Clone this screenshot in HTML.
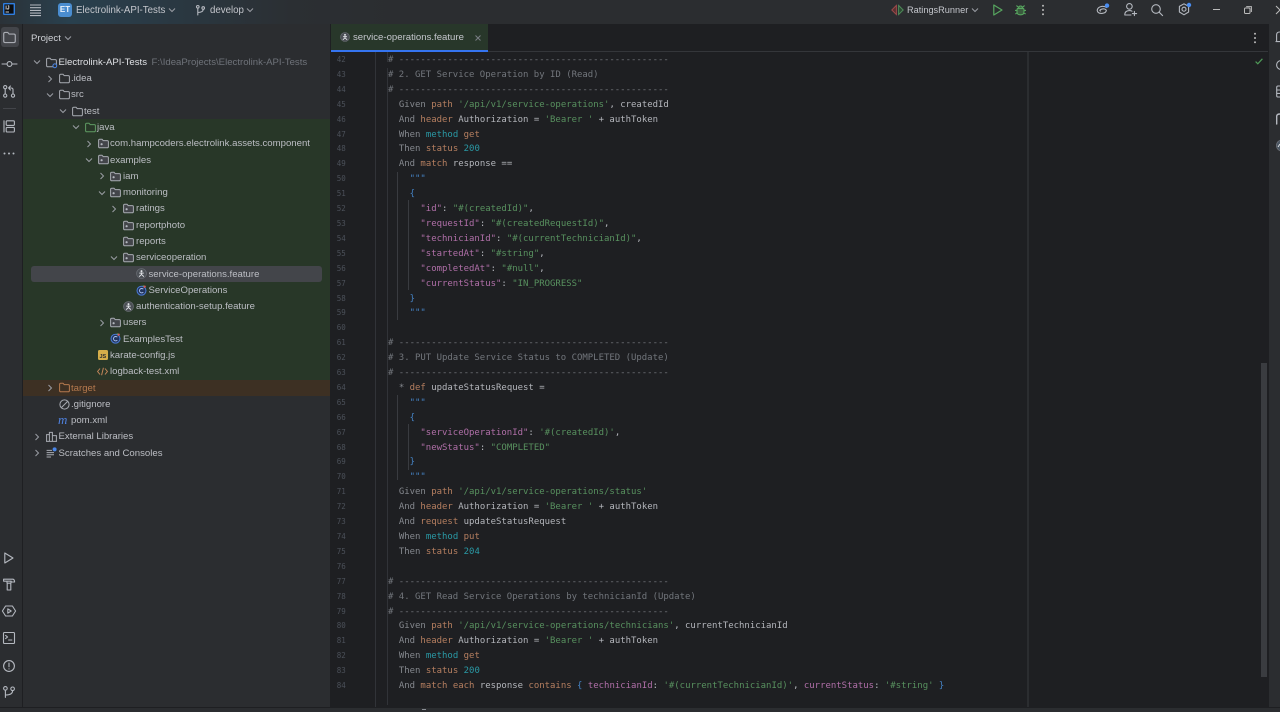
<!DOCTYPE html>
<html><head><meta charset="utf-8"><style>
html,body{margin:0;padding:0;width:1280px;height:712px;overflow:hidden;background:#1e1f22}
*{box-sizing:border-box}
#wrap{position:absolute;left:0;top:0;width:1280px;height:712px;overflow:hidden;filter:blur(.35px)}
.a{position:absolute}
#top{left:0;top:0;width:1280px;height:24px;background:linear-gradient(90deg,#2b3238 0,#29404e 70px,#2a3a45 150px,#2b2f33 290px,#2b2d30 400px);font:9.6px/23px "Liberation Sans",sans-serif;color:#c4c6cc}
#left{left:0;top:24px;width:23px;height:683px;background:#2b2d30;border-right:1px solid #1e1f22}
#panel{left:23px;top:24px;width:308px;height:683px;background:#2b2d30;border-right:1px solid #1e1f22}
#right{left:1268px;top:24px;width:12px;height:683px;background:#2b2d30}
#bottom{left:0;top:707px;width:1280px;height:5px;background:#2b2d30;border-top:1px solid #1e1f22}
#tabbar{left:331px;top:24px;width:937px;height:28px;background:#1e1f22;border-bottom:1px solid #34363a}
#tab{left:331px;top:24px;width:157px;height:28px;background:#28372a;border-bottom:2px solid #3574f0;font:9.6px/28.6px "Liberation Sans",sans-serif;color:#c4c6cc;padding-left:22px}
.s{stroke:#b4b8bf;fill:none;stroke-width:1.1;stroke-linecap:round;stroke-linejoin:round}
svg{position:absolute;overflow:visible}
#tree{left:0;top:54.9px;width:331px;font:9.6px/16.29px "Liberation Sans",sans-serif;color:#bcbec4}
.r{position:relative;height:16.29px;white-space:nowrap}
.r b{font-weight:400;position:absolute;top:0}
.r svg{top:1.8px}
.bg{position:absolute;left:23px;width:307px}
#code,#nums{font:8.97px/14.905px "DejaVu Sans Mono",monospace;white-space:pre}
#code{left:388px;top:53px;color:#b4b6bc}
#nums{left:336.7px;top:53px;font-size:7.5px;color:#4b5059}
.c{color:#72767c}.k{color:#85888e}.o{color:#b67f60}.t{color:#2a9aa6}.g{color:#58915f}.p{color:#b06fa8}.b{color:#4583c5}
.l{position:absolute;width:1px;background:#313338}
</style></head><body>
<svg width="0" height="0" style="position:absolute">
<defs>
<symbol id="f" viewBox="0 0 11 11" overflow="visible"><path d="M.6 2.4Q.6 1.2 1.8 1.2H4L5.2 2.6H9.2Q10.4 2.6 10.4 3.8V8.6Q10.4 9.8 9.2 9.8H1.8Q.6 9.8 .6 8.6Z" fill="none" stroke="#a8abb2" stroke-width="1"/></symbol>
<symbol id="fp" viewBox="0 0 11 11" overflow="visible"><path d="M.6 2.4Q.6 1.2 1.8 1.2H4L5.2 2.6H9.2Q10.4 2.6 10.4 3.8V8.6Q10.4 9.8 9.2 9.8H1.8Q.6 9.8 .6 8.6Z" fill="#43454a" stroke="#a8abb2" stroke-width="1"/><circle cx="3.6" cy="6.2" r="1.1" fill="#b4b8bf"/></symbol>
<symbol id="kar" viewBox="0 0 12 12" overflow="visible"><circle cx="6" cy="6" r="5.4" fill="#4c5056" stroke="#6f737a" stroke-width=".7"/><circle cx="6" cy="3.4" r="1.1" fill="#e4e6ea"/><path d="M6 4.8V7L3.4 9.4M6 7L8.6 9.4M3.6 5.6H8.4" stroke="#e4e6ea" stroke-width="1" fill="none"/></symbol>
<symbol id="cls" viewBox="0 0 12 12" overflow="visible"><circle cx="6" cy="6.2" r="4.9" fill="#22345c" stroke="#4a7ad8" stroke-width="1.1"/><path d="M8 4.6A2.4 2.4 0 1 0 8 7.8" fill="none" stroke="#a9c2f2" stroke-width="1"/><circle cx="9.4" cy="1.8" r="1.3" fill="#d85a5a"/><path d="M7.2 1L8.6 1" stroke="#5fae6a" stroke-width="1"/></symbol>
<symbol id="cd" viewBox="0 0 8 8" overflow="visible"><path d="M1 2.5L4 5.5L7 2.5" fill="none" stroke="#9a9da4" stroke-width="1"/></symbol>
<symbol id="cr" viewBox="0 0 8 8" overflow="visible"><path d="M2.5 1L5.5 4L2.5 7" fill="none" stroke="#9a9da4" stroke-width="1"/></symbol>
</defs></svg>
<div id="wrap">
<div id="top" class="a">
<svg style="left:3px;top:3px" width="12" height="12"><rect width="12" height="12" fill="#2f7ee0" rx="1"/><rect x="1.4" y="1.4" width="9.2" height="9.2" fill="#0c0d10"/><text x="2.4" y="6.4" font-family="Liberation Sans" font-size="5" font-weight="700" fill="#fff">IJ</text><path d="M2.6 9H6" stroke="#fff" stroke-width=".8"/></svg>
<svg style="left:30px;top:4px" width="11" height="12"><path d="M0 1H11M0 3.7H11M0 6.4H11M0 9.1H11M0 11.6H11" stroke="#b4b8bf" stroke-width="1.1" fill="none"/></svg>
<div class="a" style="left:58px;top:3px;width:14px;height:14px;border-radius:3px;background:#4a8dd0;color:#e8f1fb;font:700 8px/14px 'Liberation Sans',sans-serif;text-align:center;">ET</div>
<span class="a" style="left:76px;top:-1px;font-size:9.7px">Electrolink-API-Tests</span>
<svg style="left:168px;top:6px" width="8" height="8"><use href="#cd" width="8" height="8"/></svg>
<svg style="left:196px;top:5px" width="9" height="11" class="s"><circle cx="1.8" cy="1.8" r="1.3"/><circle cx="7.2" cy="3" r="1.3"/><path d="M1.8 3.2V10M1.8 7.5Q7.2 7.5 7.2 4.4"/></svg>
<span class="a" style="left:210px;top:-1px;font-size:9.7px">develop</span>
<svg style="left:246px;top:6px" width="8" height="8"><use href="#cd" width="8" height="8"/></svg>

<svg style="left:891px;top:4px" width="13" height="12"><path d="M5.4 1.4L.8 6L5.4 10.6Z" fill="#5a2f30" stroke="#9b4a4a"/><path d="M7.6 1.4L12.2 6L7.6 10.6Z" fill="#2d4a33" stroke="#4f8a5a"/></svg>
<span class="a" style="left:907px;top:-1px;font-size:9.2px">RatingsRunner</span>
<svg style="left:971px;top:6px" width="8" height="8"><use href="#cd" width="8" height="8"/></svg>
<svg style="left:993px;top:4px" width="10" height="12"><path d="M.8 1V11L9 6Z" fill="none" stroke="#57a65f" stroke-width="1.2" stroke-linejoin="round"/></svg>
<svg style="left:1015px;top:4px" width="11" height="12"><path d="M3 4.4H8Q9 4.4 9 6V8Q9 10.8 5.5 10.8T2 8V6Q2 4.4 3 4.4ZM3.6 4.4Q3.6 2 5.5 2T7.4 4.4M0 6.4H2M9 6.4H11M.4 10L2.4 8.6M10.6 10L8.6 8.6M1.4 1.6L3.4 3.2M9.6 1.6L7.6 3.2" fill="#3a5b3e" stroke="#57a65f" stroke-width="1.1"/></svg>
<svg style="left:1041px;top:4px" width="4" height="12"><circle cx="2" cy="1.8" r="1" fill="#bbb"/><circle cx="2" cy="6" r="1" fill="#bbb"/><circle cx="2" cy="10.2" r="1" fill="#bbb"/></svg>
<svg style="left:1096px;top:3px" width="14" height="13" class="s"><path d="M10.6 4.6Q8 2.8 4.8 3.6T1.2 7.4Q1.8 10.8 6 10.4T10.4 7.2Q8.6 5.2 5.6 6.2T4.6 8"/><circle cx="11" cy="2.6" r="2.2" fill="#4a8df0" stroke="none"/></svg>
<svg style="left:1124px;top:3px" width="13" height="13" class="s"><circle cx="5.4" cy="3.4" r="2.8"/><path d="M.8 12Q.8 7.6 5.4 7.6Q7 7.6 8 8.2M.8 12H7M10.4 8.4V12.6M8.4 10.6H12.6"/></svg>
<svg style="left:1151px;top:3.5px" width="12" height="12" class="s" ><circle cx="5" cy="5" r="4.3"/><path d="M8.2 8.2L11.6 11.6"/></svg>
<svg style="left:1178px;top:3px" width="13" height="13" class="s"><path d="M6 .8L10.6 3.4V9L6 11.8L1.4 9V3.4Z"/><circle cx="6" cy="6.2" r="2"/><circle cx="11" cy="2" r="2.2" fill="#4a8df0" stroke="none"/></svg>
<div class="a" style="left:1213px;top:9px;width:7px;height:1px;background:#bbb"></div>
<svg style="left:1244px;top:6px" width="8" height="8" fill="none" stroke="#bbb"><rect x=".5" y="2" width="5.5" height="5.5" rx="1"/><path d="M2.2 .6H7.4V6"/></svg>
<svg style="left:1276px;top:6px" width="4" height="8" fill="none" stroke="#bbb"><path d="M0 0L8 8M0 8L8 0"/></svg>
</div>

<div id="left" class="a"></div>
<div class="a" style="left:1px;top:27px;width:18px;height:20px;border-radius:3px;background:#43454a"></div>
<svg style="left:3px;top:31px" width="13" height="13"><use href="#f" width="13" height="13"/></svg>
<svg style="left:2px;top:60px" width="15" height="8" class="s"><circle cx="7.5" cy="4" r="2.4"/><path d="M0 4H5M10 4H15"/></svg>
<svg style="left:3px;top:85px" width="12" height="13" class="s"><circle cx="2.2" cy="2.2" r="1.6"/><circle cx="2.2" cy="10.6" r="1.6"/><circle cx="10" cy="10.6" r="1.6"/><path d="M2.2 3.8V9M10 9V4.6Q10 3 8 3H6M7.4 1L5.6 3L7.4 5"/></svg>
<div class="a" style="left:3px;top:108px;width:13px;height:1px;background:#43454a"></div>
<svg style="left:3px;top:120px" width="12" height="13" class="s"><path d="M1 .8V12"/><rect x="3.2" y=".8" width="8.2" height="4.6" rx="1"/><rect x="3.2" y="7.4" width="8.2" height="4.6" rx="1"/></svg>
<svg style="left:3px;top:152px" width="12" height="3"><circle cx="1.5" cy="1.5" r="1" fill="#b4b8bf"/><circle cx="6" cy="1.5" r="1" fill="#b4b8bf"/><circle cx="10.5" cy="1.5" r="1" fill="#b4b8bf"/></svg>
<svg style="left:4px;top:552px" width="10" height="12" class="s"><path d="M.8 1V11L9 6Z"/></svg>
<svg style="left:3px;top:578px" width="12" height="13" class="s"><path d="M.6 1.2H10Q11.6 1.6 11.6 4H8.2V3.2H.6ZM4 3.4V5M8 3.4V5M4.2 5.2H7.8V12H4.2Z"/></svg>
<svg style="left:2px;top:605px" width="14" height="12" class="s"><path d="M3.6 1H10.4L13.6 6L10.4 11H3.6L.4 6Z"/><path d="M5.8 3.8V8.2L9.2 6Z"/></svg>
<svg style="left:3px;top:632px" width="12" height="12" class="s"><rect x=".5" y=".5" width="11" height="11" rx="1"/><path d="M2.6 3.4L4.6 5L2.6 6.6M5.6 8H8.8"/></svg>
<svg style="left:3px;top:660px" width="12" height="12" class="s"><circle cx="6" cy="6" r="5.4"/><path d="M6 3V6.8M6 8.8V9"/></svg>
<svg style="left:3px;top:686px" width="12" height="12" class="s"><circle cx="2.4" cy="2.4" r="1.8"/><circle cx="9.6" cy="2.8" r="1.8"/><path d="M2.4 4.2V11.4M2.4 9Q9.6 9 9.6 4.6"/></svg>

<div id="panel" class="a"></div>
<div class="a" style="left:31px;top:32px;font:9.6px/13px 'Liberation Sans',sans-serif;color:#d0d2d7">Project</div>
<svg style="left:64px;top:34px" width="8" height="8"><use href="#cd" width="8" height="8"/></svg>

<div class="bg" style="top:119.1px;height:260.7px;background:#283728"></div>
<div class="bg" style="top:379.8px;height:16.3px;background:#3d3023"></div>
<div class="a" style="left:31px;top:265.7px;width:291px;height:16.5px;border-radius:3px;background:#43454a"></div>

<div id="tree" class="a">
<div class="r"><svg style="left:32.5px;top:3.4px" width="8" height="8"><use href="#cd" width="8" height="8"/></svg><svg style="left:46px" width="11" height="11"><use href="#f" width="11" height="11"/><circle cx="8.8" cy="8.8" r="1.9" fill="#2b2d30" stroke="#4a86e8"/></svg><b style="left:58.5px;color:#dfe1e5">Electrolink-API-Tests</b><b style="left:151.5px;color:#6f737a">F:\IdeaProjects\Electrolink-API-Tests</b></div>
<div class="r"><svg style="left:45.5px;top:3.4px" width="8" height="8"><use href="#cr" width="8" height="8"/></svg><svg style="left:59px" width="11" height="11"><use href="#f" width="11" height="11"/></svg><b style="left:71px">.idea</b></div>
<div class="r"><svg style="left:45.5px;top:3.4px" width="8" height="8"><use href="#cd" width="8" height="8"/></svg><svg style="left:59px" width="11" height="11"><use href="#f" width="11" height="11"/></svg><b style="left:71px">src</b></div>
<div class="r"><svg style="left:58.5px;top:3.4px" width="8" height="8"><use href="#cd" width="8" height="8"/></svg><svg style="left:72px" width="11" height="11"><use href="#f" width="11" height="11"/></svg><b style="left:84px">test</b></div>
<div class="r"><svg style="left:71.5px;top:3.4px" width="8" height="8"><use href="#cd" width="8" height="8"/></svg><svg style="left:85px" width="11" height="11"><path d="M.6 2.4Q.6 1.2 1.8 1.2H4L5.2 2.6H9.2Q10.4 2.6 10.4 3.8V8.6Q10.4 9.8 9.2 9.8H1.8Q.6 9.8 .6 8.6Z" fill="none" stroke="#5f9b63"/></svg><b style="left:97px">java</b></div>
<div class="r"><svg style="left:84.5px;top:3.4px" width="8" height="8"><use href="#cr" width="8" height="8"/></svg><svg style="left:98px" width="11" height="11"><use href="#fp" width="11" height="11"/></svg><b style="left:110px">com.hampcoders.electrolink.assets.component</b></div>
<div class="r"><svg style="left:84.5px;top:3.4px" width="8" height="8"><use href="#cd" width="8" height="8"/></svg><svg style="left:98px" width="11" height="11"><use href="#fp" width="11" height="11"/></svg><b style="left:110px">examples</b></div>
<div class="r"><svg style="left:97.5px;top:3.4px" width="8" height="8"><use href="#cr" width="8" height="8"/></svg><svg style="left:110px" width="11" height="11"><use href="#fp" width="11" height="11"/></svg><b style="left:123px">iam</b></div>
<div class="r"><svg style="left:97.5px;top:3.4px" width="8" height="8"><use href="#cd" width="8" height="8"/></svg><svg style="left:110px" width="11" height="11"><use href="#fp" width="11" height="11"/></svg><b style="left:123px">monitoring</b></div>
<div class="r"><svg style="left:109.5px;top:3.4px" width="8" height="8"><use href="#cr" width="8" height="8"/></svg><svg style="left:123px" width="11" height="11"><use href="#fp" width="11" height="11"/></svg><b style="left:136px">ratings</b></div>
<div class="r"><svg style="left:123px" width="11" height="11"><use href="#fp" width="11" height="11"/></svg><b style="left:136px">reportphoto</b></div>
<div class="r"><svg style="left:123px" width="11" height="11"><use href="#fp" width="11" height="11"/></svg><b style="left:136px">reports</b></div>
<div class="r"><svg style="left:109.5px;top:3.4px" width="8" height="8"><use href="#cd" width="8" height="8"/></svg><svg style="left:123px" width="11" height="11"><use href="#fp" width="11" height="11"/></svg><b style="left:136px">serviceoperation</b></div>
<div class="r"><svg style="left:136px" width="11" height="11"><use href="#kar" width="11" height="11"/></svg><b style="left:148.5px">service-operations.feature</b></div>
<div class="r"><svg style="left:136px" width="11" height="11"><use href="#cls" width="11" height="11"/></svg><b style="left:148.5px">ServiceOperations</b></div>
<div class="r"><svg style="left:123px" width="11" height="11"><use href="#kar" width="11" height="11"/></svg><b style="left:136px">authentication-setup.feature</b></div>
<div class="r"><svg style="left:97.5px;top:3.4px" width="8" height="8"><use href="#cr" width="8" height="8"/></svg><svg style="left:110px" width="11" height="11"><use href="#fp" width="11" height="11"/></svg><b style="left:123px">users</b></div>
<div class="r"><svg style="left:110px" width="11" height="11"><use href="#cls" width="11" height="11"/></svg><b style="left:123px">ExamplesTest</b></div>
<div class="r"><svg style="left:98px;top:2.4px" width="10" height="10"><rect width="10" height="10" rx="1.5" fill="#d6ae4a"/><text x="1.5" y="8" font-family="Liberation Sans" font-size="5.5" font-weight="700" fill="#2b2d30">JS</text></svg><b style="left:110px">karate-config.js</b></div>
<div class="r"><svg style="left:97px;top:2.8px" width="11" height="9" fill="none" stroke="#c4865a"><path d="M3 1.5L.6 4.5L3 7.5M8 1.5L10.4 4.5L8 7.5M6.4 .8L4.6 8.2"/></svg><b style="left:110px">logback-test.xml</b></div>
<div class="r"><svg style="left:45.5px;top:3.4px" width="8" height="8"><use href="#cr" width="8" height="8"/></svg><svg style="left:59px" width="11" height="11"><path d="M.6 2.4Q.6 1.2 1.8 1.2H4L5.2 2.6H9.2Q10.4 2.6 10.4 3.8V8.6Q10.4 9.8 9.2 9.8H1.8Q.6 9.8 .6 8.6Z" fill="none" stroke="#b5794e"/></svg><b style="left:71px;color:#b5794e">target</b></div>
<div class="r"><svg style="left:59px" width="11" height="11" fill="none" stroke="#a8abb2"><circle cx="5.5" cy="5.5" r="4.6"/><path d="M2.4 8.6L8.6 2.4"/></svg><b style="left:71px">.gitignore</b></div>
<div class="r"><span style="position:absolute;left:58px;top:-1px;font:italic 13px/15px 'Liberation Serif',serif;color:#4f82e0">m</span><b style="left:71px">pom.xml</b></div>
<div class="r"><svg style="left:32.5px;top:3.4px" width="8" height="8"><use href="#cr" width="8" height="8"/></svg><svg style="left:46px" width="11" height="11" fill="none" stroke="#a8abb2"><path d="M.6 10.4V3.6H3.4V10.4ZM3.4 10.4V1.4H6.4V10.4M6.4 10.4V4.6H10.4V10.4ZM0 10.4H11"/></svg><b style="left:58.5px">External Libraries</b></div>
<div class="r"><svg style="left:32.5px;top:3.4px" width="8" height="8"><use href="#cr" width="8" height="8"/></svg><svg style="left:46px" width="11" height="11" fill="none" stroke="#a8abb2"><path d="M.6 3.4H6M.6 5.6H8M.6 7.8H8M.6 10H5"/><circle cx="8.6" cy="2.4" r="2" fill="#4a86e8" stroke="none"/></svg><b style="left:58.5px">Scratches and Consoles</b></div>
</div>

<div id="tabbar" class="a"></div>
<div id="tab" class="a">service-operations.feature</div>
<svg style="left:340px;top:32px" width="10" height="10"><use href="#kar" width="10" height="10"/></svg>
<svg style="left:475px;top:35px" width="6" height="6" fill="none" stroke="#7a7e85"><path d="M.5 .5L5.5 5.5M.5 5.5L5.5 .5"/></svg>
<svg style="left:1253px;top:32px" width="4" height="12"><circle cx="2" cy="1.8" r="1" fill="#bbb"/><circle cx="2" cy="6" r="1" fill="#bbb"/><circle cx="2" cy="10.2" r="1" fill="#bbb"/></svg>

<div class="l" style="left:375px;top:52px;height:655px"></div>
<div class="l" style="left:387px;top:52px;height:10px"></div>
<div class="l" style="left:387px;top:68px;height:637px"></div>
<div class="l" style="left:397px;top:172px;height:148px;background:#393b40"></div>
<div class="l" style="left:408px;top:200px;height:90px;background:#393b40"></div>
<div class="l" style="left:397px;top:395px;height:85px;background:#393b40"></div>
<div class="l" style="left:408px;top:424px;height:46px;background:#393b40"></div>
<div class="l" style="left:1027px;top:52px;height:655px;background:#2b2d30;width:1.5px"></div>

<div id="nums" class="a">42
43
44
45
46
47
48
49
50
51
52
53
54
55
56
57
58
59
60
61
62
63
64
65
66
67
68
69
70
71
72
73
74
75
76
77
78
79
80
81
82
83
84</div>

<div id="code" class="a"><span class="c"># --------------------------------------------------
# 2. GET Service Operation by ID (Read)
# --------------------------------------------------</span>
  <span class="k">Given</span> <span class="o">path</span> <span class="g">'/api/v1/service-operations'</span>, createdId
  <span class="k">And</span> <span class="o">header</span> Authorization = <span class="g">'Bearer '</span> + authToken
  <span class="k">When</span> <span class="t">method</span> <span class="o">get</span>
  <span class="k">Then</span> <span class="o">status</span> <span class="t">200</span>
  <span class="k">And</span> <span class="o">match</span> response ==
    <span class="b">"""</span>
    <span class="b">{</span>
      <span class="p">"id"</span>: <span class="g">"#(createdId)"</span>,
      <span class="p">"requestId"</span>: <span class="g">"#(createdRequestId)"</span>,
      <span class="p">"technicianId"</span>: <span class="g">"#(currentTechnicianId)"</span>,
      <span class="p">"startedAt"</span>: <span class="g">"#string"</span>,
      <span class="p">"completedAt"</span>: <span class="g">"#null"</span>,
      <span class="p">"currentStatus"</span>: <span class="g">"IN_PROGRESS"</span>
    <span class="b">}</span>
    <span class="b">"""</span>

<span class="c"># --------------------------------------------------
# 3. PUT Update Service Status to COMPLETED (Update)
# --------------------------------------------------</span>
  <span class="k">*</span> <span class="o">def</span> updateStatusRequest =
    <span class="b">"""</span>
    <span class="b">{</span>
      <span class="p">"serviceOperationId"</span>: <span class="g">'#(createdId)'</span>,
      <span class="p">"newStatus"</span>: <span class="g">"COMPLETED"</span>
    <span class="b">}</span>
    <span class="b">"""</span>
  <span class="k">Given</span> <span class="o">path</span> <span class="g">'/api/v1/service-operations/status'</span>
  <span class="k">And</span> <span class="o">header</span> Authorization = <span class="g">'Bearer '</span> + authToken
  <span class="k">And</span> <span class="o">request</span> updateStatusRequest
  <span class="k">When</span> <span class="t">method</span> <span class="o">put</span>
  <span class="k">Then</span> <span class="o">status</span> <span class="t">204</span>

<span class="c"># --------------------------------------------------
# 4. GET Read Service Operations by technicianId (Update)
# --------------------------------------------------</span>
  <span class="k">Given</span> <span class="o">path</span> <span class="g">'/api/v1/service-operations/technicians'</span>, currentTechnicianId
  <span class="k">And</span> <span class="o">header</span> Authorization = <span class="g">'Bearer '</span> + authToken
  <span class="k">When</span> <span class="t">method</span> <span class="o">get</span>
  <span class="k">Then</span> <span class="o">status</span> <span class="t">200</span>
  <span class="k">And</span> <span class="o">match</span> <span class="o">each</span> response <span class="o">contains</span> <span class="b">{</span> <span class="p">technicianId</span>: <span class="g">'#(currentTechnicianId)'</span>, <span class="p">currentStatus</span>: <span class="g">'#string'</span> <span class="b">}</span></div>

<svg style="left:1255px;top:58px" width="8" height="7" fill="none" stroke="#4f9a58" stroke-width="1.2"><path d="M.6 3.6L2.8 5.8L7.4 .8"/></svg>
<div class="a" style="left:1261px;top:363px;width:6px;height:314px;background:#3a3c40"></div>

<div id="right" class="a"></div>
<div class="a" style="left:1268px;top:24px;width:1px;height:683px;background:#1e1f22"></div>
<svg style="left:1276px;top:31px" width="4" height="13" class="s"><path d="M.6 10V4Q.6 1 3.6 1M0 10.6H5"/></svg>
<svg style="left:1276px;top:58px" width="4" height="13" class="s"><circle cx="5" cy="7" r="4.4"/></svg>
<svg style="left:1276px;top:85px" width="4" height="13" class="s"><path d="M5 1H2Q.7 1 .7 2.4V11Q.7 12 2 12H5M.7 5H5M.7 8.4H5"/></svg>
<svg style="left:1276px;top:113px" width="4" height="12" class="s"><path d="M.7 11V3Q1 1 4 1" stroke-width="1.4"/></svg>
<svg style="left:1276px;top:139px" width="4" height="13"><circle cx="6" cy="6.5" r="5.6" fill="#4a5662" stroke="#6f737a" stroke-width=".7"/><path d="M2 8L4 5" stroke="#dfe1e5"/></svg>

<div id="bottom" class="a"></div>
<div class="a" style="left:422px;top:709px;width:4px;height:1px;background:#8a8d93"></div>
</div>
</body></html>
